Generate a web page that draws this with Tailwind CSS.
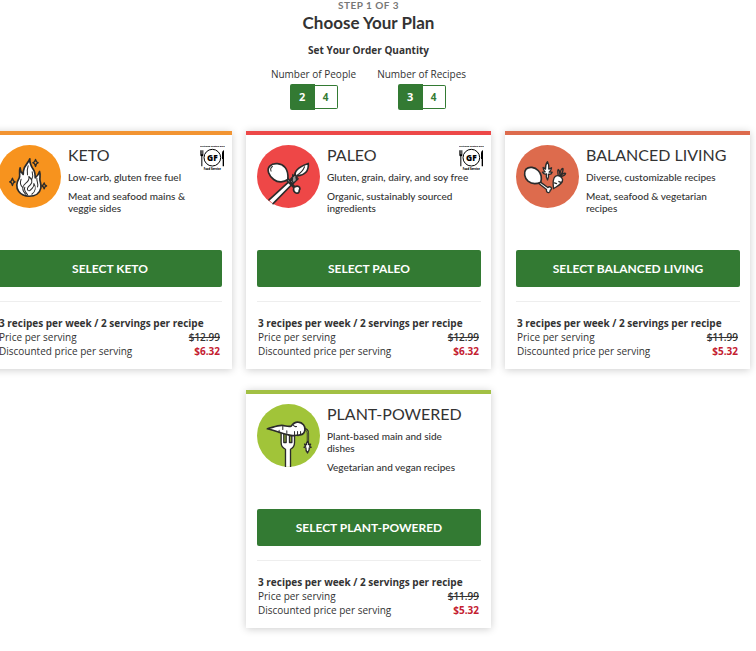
<!DOCTYPE html>
<html lang="en">
  <head>
    <meta charset="UTF-8" />
    <meta name="viewport" content="width=device-width, initial-scale=1.0" />
    <title>Choose Your Plan</title>
    <script src="https://cdn.jsdelivr.net/npm/@tailwindcss/browser@4"></script>
  </head>
  <body class="bg-white text-[#333] font-['Open_Sans',sans-serif] text-[10px] leading-[14px] overflow-x-hidden">
    <!-- Gluten free badge, shared by the cards -->
    <svg class="hidden">
      <symbol id="gf-badge" viewBox="0 0 75 78">
        <text x="37" y="7" text-anchor="middle" font-family="Open Sans, sans-serif" font-weight="800" font-size="7">Certified Gluten Free</text>
        <text x="37" y="75" text-anchor="middle" font-family="Open Sans, sans-serif" font-weight="800" font-size="8">Food Service</text>
        <circle cx="37" cy="38" r="25" fill="#fff" stroke="#000" stroke-width="3" />
        <text x="37" y="47" text-anchor="middle" font-family="Open Sans, sans-serif" font-weight="800" font-size="25">GF</text>
        <path d="M1 16v14q0 4 3 4v30h3V34q3 0 3-4V16H8v12H7V16H4v12H3V16z" />
        <path d="M68 64V42h-2V24q0-6 6-9v49z" />
      </symbol>
    </svg>

    <main class="mr-[19px] pb-[22px]">
      <header class="text-center">
        <p class="font-['Lato',sans-serif] text-[10px] leading-[10px] font-bold tracking-wider text-[#777]">STEP 1 OF 3</p>
        <h1 class="mt-[2px] font-['Lato',sans-serif] text-[17px] leading-[22px] font-bold">Choose Your Plan</h1>
        <h2 class="mt-[9px] font-bold">Set Your Order Quantity</h2>
        <div class="mt-[10px] flex justify-center gap-[21px]">
          <div role="group" aria-labelledby="people">
            <p id="people">Number of People</p>
            <div class="mt-[3px] flex items-center justify-center">
              <button aria-pressed="true" class="h-[26px] w-[25px] rounded-l-xs bg-[#337a33] text-[11px] font-bold text-white">2</button>
              <button aria-pressed="false" class="h-6 w-[23px] rounded-r-xs border border-l-0 border-[#337a33] font-bold text-[#337a33]">4</button>
            </div>
          </div>
          <div role="group" aria-labelledby="recipes">
            <p id="recipes">Number of Recipes</p>
            <div class="mt-[3px] flex items-center justify-center">
              <button aria-pressed="true" class="h-[26px] w-[25px] rounded-l-xs bg-[#337a33] text-[11px] font-bold text-white">3</button>
              <button aria-pressed="false" class="h-6 w-[23px] rounded-r-xs border border-l-0 border-[#337a33] font-bold text-[#337a33]">4</button>
            </div>
          </div>
        </div>
      </header>

      <section class="-mx-[13px] mt-[21px] grid grid-cols-3 gap-x-[14px] gap-y-[21px]">
        <!-- Keto -->
        <article class="border-t-4 border-[#f29432] bg-white pt-[10px] pr-[10px] pb-[11px] pl-[11px] shadow-[0_1px_8px_rgba(0,0,0,0.2)]">
          <div class="flex min-h-[105px] gap-[7px]">
            <svg class="size-[63px] shrink-0" viewBox="0 0 188 188" fill="none" stroke="#2b2b2b" stroke-width="4" stroke-linejoin="round" stroke-linecap="round">
              <circle cx="94" cy="94" r="94" fill="#f7931e" stroke="none" />
              <path d="M95 41c-3 12-17 19-19 36-1 5 0 8-1 11-5-5-9-11-9-20-5 14 2 22-3 31-8 12-10 29-1 40 7 9 18 14 31 14 18 0 32-9 35-25 2-12-3-17-3-26 0-7 2-14-1-23-3 10-8 15-13 19 0-10 0-17-5-24-7-10-12-20-11-33z" fill="#fff" stroke-width="5" />
              <path d="M90 62c-3 9-4 17-2 27M102 80c3 9 2 15-1 22M69 102c-5 14 0 21 5 25M116 99c-1 10 5 15 2 26M83 147c-13-11-11-25 0-33 8-6 11-12 9-20 10 8 12 17 5 24-6 6-13 10-8 17 5 5 9-2 14-7 5-5 4-9 4-13 7 11 5 24-6 32M80 126c-4 9 2 14 8 22" stroke-width="3" />
              <path d="m112 43 3 7 5 3-5 3-3 8-3-8-5-3 5-3zM43 99l3 8 5 3-5 3-3 8-3-8-5-3 5-3zM138 113l2 6 5 3-5 3-2 6-3-6-4-3 4-3z" />
            </svg>
            <div class="min-w-0 flex-1 font-['Lato',sans-serif] leading-3 font-medium">
              <div class="-mr-[3px] flex h-[26px] justify-between">
                <h3 class="text-[16px] leading-5 font-normal">KETO</h3>
                <svg class="h-[26px] w-[25px]" role="img" aria-label="Certified gluten free"><use href="#gf-badge" /></svg>
              </div>
              <p>Low-carb, gluten free fuel</p>
              <p class="mt-[7px] max-w-[140px]">Meat and seafood mains &amp; veggie sides</p>
            </div>
          </div>
          <button class="h-[37px] w-full rounded-xs bg-[#337a33] font-['Lato',sans-serif] text-[12px] font-bold text-white">SELECT KETO</button>
          <hr class="mt-[14px] border-[#eee]" />
          <div class="pt-[14px] pr-[2px] pl-px">
            <h4 class="font-bold">3 recipes per week / 2 servings per recipe</h4>
            <p class="flex justify-between">Price per serving <s class="font-semibold">$12.99</s></p>
            <p class="flex justify-between">Discounted price per serving <strong class="text-[#c4202f]">$6.32</strong></p>
          </div>
        </article>

        <!-- Paleo -->
        <article class="border-t-4 border-[#ed4848] bg-white pt-[10px] pr-[10px] pb-[11px] pl-[11px] shadow-[0_1px_8px_rgba(0,0,0,0.2)]">
          <div class="flex min-h-[105px] gap-[7px]">
            <svg class="size-[63px] shrink-0" viewBox="0 0 188 188" fill="#fff" stroke="#2b2b2b" stroke-width="4" stroke-linejoin="round" stroke-linecap="round">
              <circle cx="94" cy="94" r="94" fill="#ee4747" stroke="none" />
              <path d="m36 164 66-61 8 9-62 63" stroke-width="5" />
              <path d="M112 97c-1-19 10-31 41-42 2 21-8 35-33 37z" stroke-width="5" />
              <path d="M142 65c-5 12-12 19-22 25" fill="none" stroke-width="3" />
              <path d="m101 101 12-12 10 12-14 13zM107 88l-2 17M114 83l4 22" fill="#999" />
              <path d="M85 102l25 25c-2 7 0 14 8 17 6 0 9-4 8-9 3-3 3-9-2-11-5-3-9 0-12 1L91 98z" stroke-width="5" />
              <path d="M92 103c-11 8-28 11-42 0C35 91 28 74 38 63c11-12 35-9 46 4 9 11 9 25 8 36z" stroke-width="5" />
              <path d="M46 64c-5 3-6 9-4 14" stroke-width="3" />
            </svg>
            <div class="min-w-0 flex-1 font-['Lato',sans-serif] leading-3 font-medium">
              <div class="-mr-[3px] flex h-[26px] justify-between">
                <h3 class="text-[16px] leading-5 font-normal">PALEO</h3>
                <svg class="h-[26px] w-[25px]" role="img" aria-label="Certified gluten free"><use href="#gf-badge" /></svg>
              </div>
              <p>Gluten, grain, dairy, and soy free</p>
              <p class="mt-[7px] max-w-[140px]">Organic, sustainably sourced ingredients</p>
            </div>
          </div>
          <button class="h-[37px] w-full rounded-xs bg-[#337a33] font-['Lato',sans-serif] text-[12px] font-bold text-white">SELECT PALEO</button>
          <hr class="mt-[14px] border-[#eee]" />
          <div class="pt-[14px] pr-[2px] pl-px">
            <h4 class="font-bold">3 recipes per week / 2 servings per recipe</h4>
            <p class="flex justify-between">Price per serving <s class="font-semibold">$12.99</s></p>
            <p class="flex justify-between">Discounted price per serving <strong class="text-[#c4202f]">$6.32</strong></p>
          </div>
        </article>

        <!-- Balanced living -->
        <article class="border-t-4 border-[#dd6b4d] bg-white pt-[10px] pr-[10px] pb-[11px] pl-[11px] shadow-[0_1px_8px_rgba(0,0,0,0.2)]">
          <div class="flex min-h-[105px] gap-[7px]">
            <svg class="size-[63px] shrink-0" viewBox="0 0 188 188" fill="#fff" stroke="#2b2b2b" stroke-width="4" stroke-linejoin="round" stroke-linecap="round">
              <circle cx="94" cy="94" r="94" fill="#dd6b4d" stroke="none" />
              <path d="m68 115 23 18c-1 6 2 10 7 9 4-1 4-4 4-7 4-1 5-6 2-9-3-2-7-1-9 1L72 110z" />
              <path d="M74 111c-11 5-27 6-38-3-11-10-14-27-6-36 9-9 26-6 36 4s11 23 8 35z" stroke-width="5" />
              <path d="M94 104c-5-8-4-14-3-18-5 2-9 0-12-5l8-1c-4-3-6-8-6-13l7 5c-1-9 2-17 6-22 4 7 5 13 4 22l8-4c0 6-3 10-7 13l9 0c-2 5-6 7-11 6 1 6 0 11-3 17z" />
              <path d="M126 91c-1-9-3-15 0-18 5 3 5 9 5 15 1-8 4-17 9-18 2 7-2 13-6 20 5-5 9-7 14-5-1 6-7 8-13 9z" fill="#dd6b4d" />
              <path d="M112 130c-2-15-2-30 5-36 8-6 20 0 22 9 2 13-16 20-27 27zM136 112l-8-3M115 113l6 2" />
            </svg>
            <div class="min-w-0 flex-1 font-['Lato',sans-serif] leading-3 font-medium">
              <h3 class="h-[26px] text-[16px] leading-5 font-normal">BALANCED LIVING</h3>
              <p>Diverse, customizable recipes</p>
              <p class="mt-[7px] max-w-[140px]">Meat, seafood &amp; vegetarian recipes</p>
            </div>
          </div>
          <button class="h-[37px] w-full rounded-xs bg-[#337a33] font-['Lato',sans-serif] text-[12px] font-bold text-white">SELECT BALANCED LIVING</button>
          <hr class="mt-[14px] border-[#eee]" />
          <div class="pt-[14px] pr-[2px] pl-px">
            <h4 class="font-bold">3 recipes per week / 2 servings per recipe</h4>
            <p class="flex justify-between">Price per serving <s class="font-semibold">$11.99</s></p>
            <p class="flex justify-between">Discounted price per serving <strong class="text-[#c4202f]">$5.32</strong></p>
          </div>
        </article>

        <!-- Plant-powered -->
        <article class="col-start-2 border-t-4 border-[#a2c044] bg-white pt-[10px] pr-[10px] pb-[11px] pl-[11px] shadow-[0_1px_8px_rgba(0,0,0,0.2)]">
          <div class="flex min-h-[105px] gap-[7px]">
            <svg class="size-[63px] shrink-0" viewBox="0 0 188 188" fill="#fff" stroke="#2b2b2b" stroke-width="4" stroke-linejoin="round" stroke-linecap="round">
              <circle cx="94" cy="94" r="94" fill="#a1c439" stroke="none" />
              <path d="M85 187v-52c-9-4-13-10-13-20V84h8v31h7V84h10v31h7V84h8v31c0 10-4 16-12 20v52" />
              <path d="M138 76c9-2 14 2 14 11v25" fill="none" stroke-width="7" />
              <path d="M140 77c8-1 12 3 12 11v24" fill="none" stroke="#a1c439" stroke-width="2" />
              <path d="M151 112c3 3 4 6 3 9l6-1-3 6 5 3-6 2c1 6-2 11-5 15-4-4-6-9-5-15l-6-2 5-3-3-6 6 1c-1-3 0-6 3-9z" />
              <path d="M31 74c16-4 29-10 43-10 11 0 18 5 28 2 5-7 11-13 21-12 13 1 22 12 20 23-1 8-6 14-14 15-6 3-12 0-17 2-9 2-15-1-22-3-16-2-30-11-59-17z" stroke-width="5" />
              <path d="M66 78v8M77 67v9M89 87v-7M112 82v9M121 82v9M130 82v8M108 63c3 5 7 5 10 4" stroke-width="3" />
            </svg>
            <div class="min-w-0 flex-1 font-['Lato',sans-serif] leading-3 font-medium">
              <h3 class="h-[26px] text-[16px] leading-5 font-normal">PLANT-POWERED</h3>
              <p class="max-w-[140px]">Plant-based main and side dishes</p>
              <p class="mt-[7px]">Vegetarian and vegan recipes</p>
            </div>
          </div>
          <button class="h-[37px] w-full rounded-xs bg-[#337a33] font-['Lato',sans-serif] text-[12px] font-bold text-white">SELECT PLANT-POWERED</button>
          <hr class="mt-[14px] border-[#eee]" />
          <div class="pt-[14px] pr-[2px] pl-px">
            <h4 class="font-bold">3 recipes per week / 2 servings per recipe</h4>
            <p class="flex justify-between">Price per serving <s class="font-semibold">$11.99</s></p>
            <p class="flex justify-between">Discounted price per serving <strong class="text-[#c4202f]">$5.32</strong></p>
          </div>
        </article>
      </section>
    </main>
  </body>
</html>
